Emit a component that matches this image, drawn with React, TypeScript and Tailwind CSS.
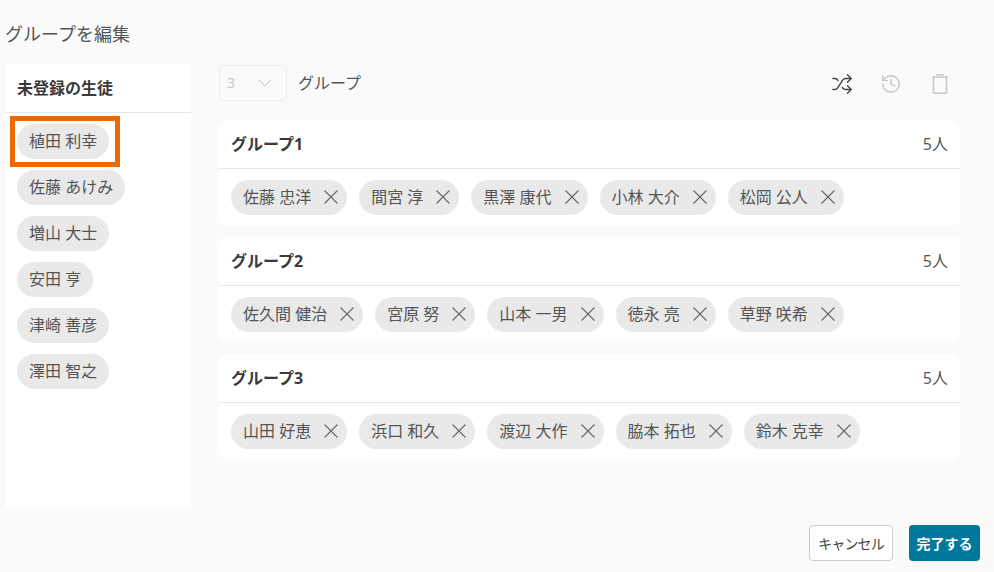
import React from "react";
import { Shuffle, History, ChevronDown } from "lucide-react";

const groups = [
  { name: "グループ1", members: ["佐藤 忠洋", "間宮 淳", "黒澤 康代", "小林 大介", "松岡 公人"] },
  { name: "グループ2", members: ["佐久間 健治", "宮原 努", "山本 一男", "徳永 亮", "草野 咲希"] },
  { name: "グループ3", members: ["山田 好恵", "浜口 和久", "渡辺 大作", "脇本 拓也", "鈴木 克幸"] },
];
const unassigned = ["植田 利幸", "佐藤 あけみ", "増山 大士", "安田 亨", "津崎 善彦", "澤田 智之"];

function CloseIcon() {
  return (
    <svg viewBox="0 0 14 14" className="ml-[13px] mr-[-3px] h-[14px] w-[14px] text-[#666666]" fill="none" stroke="currentColor" strokeWidth={1.1}>
      <path d="M0.5 0.5 13.5 13.5M13.5 0.5 0.5 13.5" />
    </svg>
  );
}

function TrashIcon() {
  return (
    <svg viewBox="0 0 16 20" className="h-[20px] w-[16px] text-[#c8c8c8]" fill="none" stroke="currentColor" strokeWidth={1.6}>
      <path d="M4 0.8h8M0 3h16M1.5 3v15.5a.8.8 0 0 0 .8.8h11.4a.8.8 0 0 0 .8-.8V3" />
    </svg>
  );
}

function Chip({ label, removable }: { label: string; removable?: boolean }) {
  return (
    <div className="flex h-[35px] w-fit items-center rounded-full bg-[#e9e9e9] px-3 pb-[2px] text-[16px] text-[#555555]">
      <span>{label}</span>
      {removable && <CloseIcon />}
    </div>
  );
}

export default function App() {
  return (
    <div className="flex h-[572px] w-[994px] flex-col overflow-hidden bg-[#fafafa] font-['Open_Sans','Noto_Sans_CJK_JP',sans-serif] text-[#444444]">
      <h1 className="px-[5px] pt-[22px] text-[18px] font-normal leading-[24px] text-[#555555]">グループを編集</h1>
      <div className="mt-[18px] flex px-[5px]">
        <aside className="relative h-[445px] w-[186px] bg-white">
          <div className="flex h-[49px] items-center border-b border-[#e6e6e6] pl-3 text-[16px] font-bold text-[#3a3a3a]">未登録の生徒</div>
          <div className="flex flex-col gap-[11px] pl-3 pt-[11px]">
            {unassigned.map((n) => <Chip key={n} label={n} />)}
          </div>
          <div className="absolute left-[5px] top-[52px] h-[51px] w-[110px] border-[5px] border-[#e96a05]" />
        </aside>
        <main className="ml-[28px] w-[741px]">
          <div className="flex h-[37px] items-center">
            <div className="flex h-[36px] w-[68px] items-center justify-between rounded border border-[#ececec] pl-[7px] pr-[9px] text-[14px] text-[#c4c4c4]">
              <span>3</span>
              <ChevronDown className="h-[24px] w-[24px] text-[#c0c0c0]" strokeWidth={1} />
            </div>
            <span className="ml-[11px] text-[16px] text-[#555555]">グループ</span>
            <div className="ml-auto mr-[8px] mt-[3px] flex items-center gap-[25px]">
              <div className="flex w-[24px] justify-center">
                <Shuffle className="h-[22px] w-[22px] text-[#444444]" strokeWidth={1.5} />
              </div>
              <div className="flex w-[24px] justify-center">
                <History className="h-[22px] w-[22px] text-[#c4c4c4]" strokeWidth={1.5} />
              </div>
              <div className="flex w-[24px] justify-center">
                <TrashIcon />
              </div>
            </div>
          </div>
          <div className="mt-[19px] flex flex-col gap-[11px]">
            {groups.map((g) => (
              <section key={g.name} className="h-[106px] rounded-lg bg-white">
                <div className="box-content flex h-[48px] items-center justify-between border-b border-[#e6e6e6] px-3 text-[16px]">
                  <span className="font-bold text-[#3a3a3a]">{g.name}</span>
                  <span className="text-[#555555]">5人</span>
                </div>
                <div className="flex gap-3 pl-3 pt-[11px]">
                  {g.members.map((m) => <Chip key={m} label={m} removable />)}
                </div>
              </section>
            ))}
          </div>
        </main>
      </div>
      <div className="mb-[11px] mt-auto flex justify-end gap-4 pr-[14px]">
        <button className="h-[36px] w-[84px] rounded border border-[#cccccc] bg-white text-[14px] tracking-[-0.8px] text-[#444444]">キャンセル</button>
        <button className="h-[36px] w-[71px] rounded bg-[#00789b] text-[14px] font-bold text-white">完了する</button>
      </div>
    </div>
  );
}
